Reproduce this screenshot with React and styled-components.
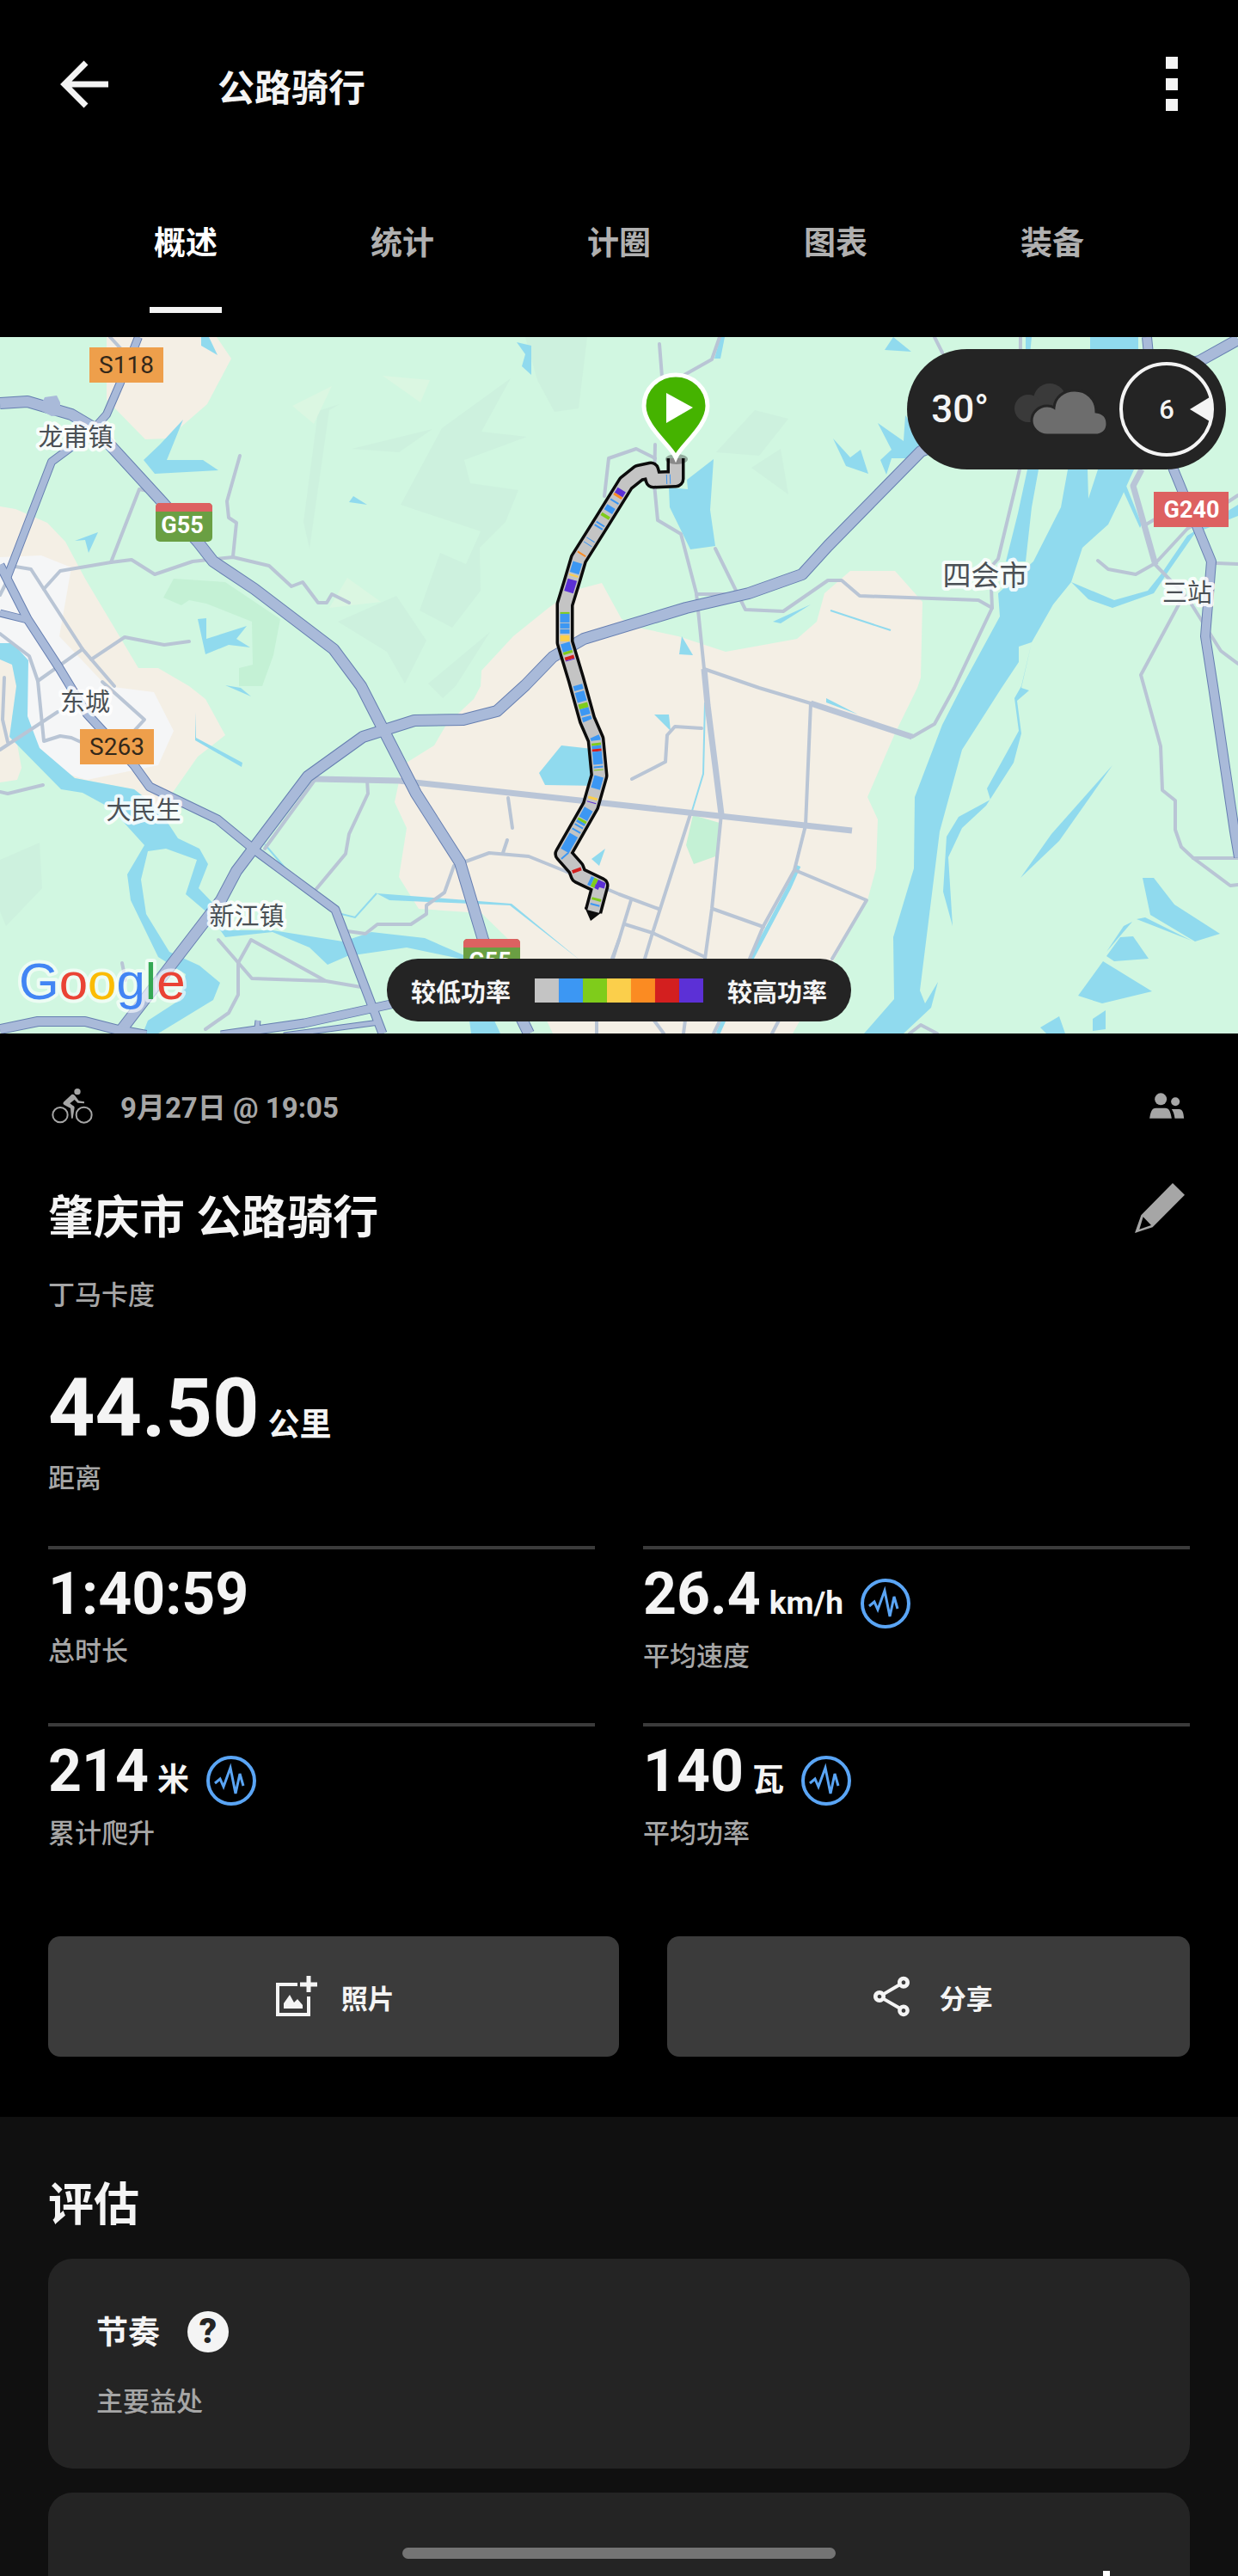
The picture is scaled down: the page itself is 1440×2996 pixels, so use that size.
import React, { useState } from "react";
import styled, { createGlobalStyle } from "styled-components";
import { MdOutlineShare } from "react-icons/md";

const tabs = ["概述", "统计", "计圈", "图表", "装备"];

const stats = [
  { value: "1:40:59", label: "总时长" },
  { value: "26.4", unit: "km/h", label: "平均速度", chart: true },
  { value: "214", unit: "米", label: "累计爬升", chart: true },
  { value: "140", unit: "瓦", label: "平均功率", chart: true },
];

const powerColors = ["#c4c4c4", "#3c97f3", "#7fcc1b", "#fbcf4b", "#fb8b22", "#d31f1f", "#5c30d6"];

const hills = [
  "611,0 683,0 673,83 645,87 625,50",
  "594,48 560,110 613,116 540,143 547,170 603,178 588,215 558,245 559,295 526,338 488,318 512,251 542,264 559,226 466,195 514,106",
  "409,130 503,107 464,134",
  "395,78 383,85 360,246 353,215 370,86",
  "393,331 461,301 496,353 471,403 450,366",
  "570,343 498,403 515,420 530,406",
  "46,588 49,641 7,685 0,668 0,608",
  "878,85 917,95 883,138 833,134",
  "908,130 917,183 874,152",
];

const forests = [
  "202,281 262,285 326,328 318,370 305,406 278,406 278,385 294,381 293,331 240,310 220,306 211,312 190,303",
  "806,556 837,565 835,603 807,613 798,591",
];

const meadows = ["386,57 365,101 340,80", "445,45 500,50 489,76", "404,280 443,308 383,315"];

const fields = [
  "124,0 252,0 269,25 241,78 195,118 169,119 124,73",
  "0,197 18,200 55,216 76,238 99,281 161,385 184,385 220,406 239,421 262,463 230,488 202,528 184,548 156,526 87,513 46,478 32,441 14,440 25,501 20,515 0,518",
  "700,286 666,295 638,315 597,348 560,388 559,406 551,421 519,451 505,475 468,498 459,541 473,571 464,628 487,665 560,670 592,701 643,810 922,810 1009,655 1019,618 1021,561 1009,535 1041,461 1067,408 1071,396 1073,308 1041,272 989,272 959,298 950,331 927,351 844,366 789,348 743,338 723,328",
];

const town = "0,256 48,254 83,268 69,348 124,406 179,413 202,458 184,498 101,515 78,508 32,465 32,376 15,356 0,356";

const water = [
  "1268,0 1324,0 1324,90 1319,154 1305,185 1289,218 1259,245 1246,285 1225,311 1200,355 1188,408 1197,411 1183,423 1188,461 1179,495 1147,545 1119,571 1103,605 1108,685 1097,645 1101,581 1115,558 1152,538 1148,525 1185,458 1180,420 1188,406 1200,355 1185,360 1185,378 1165,408 1119,480 1093,575 1070,760 1076,775 1091,750 1083,780 1051,810 1005,810 1040,770 1039,698 1063,618 1064,535 1096,451 1119,406 1163,325 1161,298 1202,261 1234,198 1242,154 1265,154 1266,188 1277,154 1268,90",
  "1195,154 1208,154 1200,198 1193,261 1170,261 1184,205",
  "1193,0 1200,0 1198,20 1193,20",
  "1308,168 1328,218 1326,222 1307,180",
  "1440,195 1440,208 1390,228 1360,271 1342,298 1294,315 1266,305 1246,285 1296,306 1335,295 1351,275 1381,231",
  "830,142 826,201 832,243 803,247 779,198 778,175 800,177 799,166",
  "969,118 989,140 1001,131 1010,159 984,150",
  "1021,100 1051,121 1053,91 1074,120 1064,141 1037,141 1031,160 1024,143 1037,131",
  "1039,0 1060,17 1029,15",
  "838,0 843,0 838,25 831,25",
  "943,311 908,333 899,331",
  "793,348 806,370 790,369",
  "213,96 194,143 236,143 254,155 180,159 167,143 186,125",
  "234,0 243,0 253,21 234,10",
  "601,6 618,10 618,44 607,34 611,20",
  "411,185 427,195 406,192",
  "114,227 103,251 99,236 87,237",
  "230,328 240,327 240,351 287,336 275,351 291,361 266,358 239,369",
  "0,356 15,356 33,376 32,441 46,478 87,513 156,526 184,548 207,583 232,595 242,613 231,641 257,668 262,690 317,690 399,703 432,692 494,699 542,720 590,745 580,750 535,723 473,710 404,720 381,730 360,710 317,692 262,698 243,671 216,648 229,608 193,595 172,598 164,631 170,671 197,715 232,731 256,751 248,771 184,810 166,810 172,795 209,771 216,741 184,721 152,655 148,625 168,591 129,548 96,530 71,526 11,465 19,406 14,381 0,375",
  "546,795 575,795 582,810 548,810",
  "227,436 228,466 282,495 281,500 227,469",
  "262,405 280,408 292,418",
  "438,647 595,659 675,725 593,661 453,655",
  "653,475 689,479 697,522 634,521 627,507",
  "704,595 697,615 688,607",
  "761,439 778,439 780,458",
  "961,420 998,439 961,425",
  "1294,498 1232,586 1187,629 1223,578",
  "1329,629 1342,629 1366,660 1419,694 1390,703 1338,672",
  "1332,675 1386,702 1322,677",
  "1317,680 1287,715 1307,685",
  "1303,698 1318,697 1336,723 1296,726 1287,720",
  "1283,726 1340,761 1282,775 1254,766",
  "1286,783 1286,805 1271,807 1271,793",
  "1232,790 1239,810 1217,810 1210,803",
];

const streams = [
  "966,318 1036,341",
  "393,670 413,675 438,647",
  "308,590 338,625",
  "820,425 818,508 805,551",
];

const streets = [
  "279,138 264,191 266,210 275,216 271,255",
  "18,267 36,270 96,363 133,406",
  "51,293 70,272 129,262 153,259 180,276 224,261 271,256 313,266 339,290 352,285 370,309 380,309 386,299 406,309",
  "129,262 162,177 177,180",
  "220,354 191,358 145,349 106,375",
  "96,363 44,400",
  "0,345 34,371 44,400 51,470 70,464 83,466 94,471",
  "119,401 168,445 156,458",
  "0,480 67,436",
  "5,396 3,445 9,471",
  "0,529 9,531 50,521",
  "128,0 141,14",
  "0,300 8,284",
  "308,595 367,514",
  "427,515 428,531 406,578 402,601 367,643",
  "591,536 596,571",
  "590,585 585,600",
  "404,691 425,694 439,683 478,683 496,671 496,661 517,646 528,615 569,600 615,604 657,621 720,648 766,665",
  "254,701 293,746 379,749 420,756",
  "379,749 292,701 277,728 277,765 266,786 239,805",
  "142,728 146,748",
  "803,555 759,693 750,723",
  "943,426 937,568 924,620 888,685 872,723 830,810",
  "839,555 828,665 820,723",
  "1061,465 1087,450 1110,408 1154,315 1138,306 1000,301 979,283 963,283 911,319 867,317 832,246",
  "816,455 785,453 776,463 774,494 735,514",
  "927,621 1008,655 968,723",
  "829,665 888,686",
  "734,655 720,701 712,723",
  "727,683 759,693 820,721",
  "767,8 770,46",
  "796,44 828,26 837,0",
  "762,125 761,171 765,213 792,229 810,298 819,386",
  "819,386 883,408 943,426",
  "810,299 849,299",
  "703,185 708,141 740,130 762,141",
  "1087,0 1096,18",
  "1187,0 1186,154 1161,258 1152,268 1154,315",
  "1344,265 1378,300 1370,313 1327,393 1350,476 1352,527 1367,539 1367,573 1374,593 1388,606 1431,638 1440,637",
  "1388,606 1440,606",
  "1277,260 1289,270 1321,276 1344,263 1381,223 1440,184",
  "1333,218 1350,208",
  "1415,263 1440,264",
  "1386,311 1420,365 1440,380",
  "755,787 772,810",
  "798,787 795,810",
  "910,787 898,810",
  "694,787 694,810",
  "720,701 712,726",
  "1058,810 1071,800 1090,810",
];

const avenues = [
  "367,514 464,516 720,544 991,574",
  "819,386 823,428 839,555",
  "943,426 1061,465",
  "1328,154 1318,173 1344,265",
];

const highways = [
  { points: "161,0 140,53 124,90 108,108", width: 8 },
  { points: "83,128 60,145 7,283", width: 8 },
  { points: "0,265 32,328 69,385 101,438 156,498 174,523 253,561 298,598 390,666 445,810", width: 9 },
  { points: "0,321 32,329", width: 7 },
  { points: "0,77 32,75 83,90 110,106 188,191 230,238 248,261 296,293 388,363 420,406 443,451 484,531 535,611 562,701 615,810", width: 12 },
  { points: "138,810 257,655 275,621 358,511 422,465 482,446 539,445 578,435 611,405 643,372 679,351 798,315 871,298 933,276 963,243 1071,133 1180,90 1395,28 1440,3", width: 12 },
  { points: "1334,0 1340,60 1365,154 1409,261 1402,348 1411,406 1436,575 1441,605", width: 10 },
  { points: "0,805 44,796 99,796 138,806 170,812", width: 10 },
  { points: "257,812 354,798 459,775 580,740", width: 9 },
  { points: "330,812 441,797", width: 5 },
  { points: "300,795 299,804", width: 5 },
];

const route =
  "786,141 786,165 760,166 757,155 743,158 728,170 700,215 673,258 665,285 657,311 657,355 670,398 683,445 693,468 697,510 687,545 655,601 670,618 673,626 698,638 690,668";

// [start, length, index in powerColors], measured along the route
const routeParts = [
  [30, 1, 1], [34, 1, 1], [104, 7, 6], [111, 3, 4], [119, 2, 1], [127, 7, 1], [138, 4, 2],
  [150, 2, 1], [154, 2, 1], [172, 1, 1], [178, 1, 1], [191, 2, 4], [203, 13, 1], [218, 2, 3],
  [224, 15, 6], [263, 2, 2], [265, 10, 1], [276, 6, 1], [283, 5, 1], [290, 7, 3], [299, 10, 1],
  [309, 3, 2], [315, 4, 5], [319, 1, 6], [350, 6, 1], [358, 12, 1], [372, 6, 2], [378, 8, 1],
  [388, 5, 1], [413, 5, 1], [421, 3, 2], [424, 4, 1], [428, 3, 5], [431, 15, 1], [448, 2, 1],
  [452, 1, 2], [460, 15, 1], [485, 3, 3], [491, 1, 6], [500, 13, 1], [514, 3, 2], [517, 3, 1],
  [522, 2, 1], [528, 2, 1], [535, 21, 1], [562, 2, 1], [583, 4, 5], [605, 4, 1], [609, 5, 2],
  [614, 7, 6], [634, 3, 2], [641, 2, 1],
];

const places = [
  { name: "龙甫镇", x: 88, y: 127 },
  { name: "四会市", x: 1146, y: 289, size: 33 },
  { name: "三站", x: 1381, y: 308 },
  { name: "东城", x: 99, y: 435 },
  { name: "大民生", x: 167, y: 561 },
  { name: "新江镇", x: 287, y: 684 },
];

function RouteMap() {
  return (
    <MapDrawing viewBox="0 0 1440 810" preserveAspectRatio="xMidYMid slice" role="img" aria-label="骑行路线">
      <rect width="1440" height="810" fill="#d1f7e1" />
      <g fill="#cdf1de">
        {hills.map((points) => <polygon key={points} points={points} />)}
      </g>
      <g fill="#dbf7e2">
        {meadows.map((points) => <polygon key={points} points={points} />)}
      </g>
      <g fill="#f4efe5">
        {fields.map((points) => <polygon key={points} points={points} />)}
      </g>
      <polygon points={town} fill="#f5f6f7" />
      <g fill="#c4f1d5">
        {forests.map((points) => <polygon key={points} points={points} />)}
      </g>
      <g fill="#90daee">
        {water.map((points) => <polygon key={points} points={points} />)}
      </g>
      <g fill="none" stroke="#90daee" strokeWidth="2">
        {streams.map((points) => <polyline key={points} points={points} />)}
        <polyline points="929,615 918,640 874,723 835,810" strokeWidth="5" />
      </g>
      <g fill="none" stroke="#b9c5d5" strokeWidth="4" strokeLinecap="round" strokeLinejoin="round">
        {streets.map((points) => <polyline key={points} points={points} />)}
      </g>
      <g fill="none" stroke="#b9c5d7" strokeWidth="7" strokeLinejoin="round">
        {avenues.map((points) => <polyline key={points} points={points} />)}
      </g>
      <g fill="none" stroke="#667fb1" strokeLinejoin="round">
        {highways.map((road) => <polyline key={road.points} points={road.points} strokeWidth={road.width + 2} />)}
      </g>
      <g fill="none" stroke="#a9bad9" strokeLinejoin="round">
        {highways.map((road) => <polyline key={road.points} points={road.points} strokeWidth={road.width} />)}
      </g>
      <polygon points="52,70 66,68 70,76 70,84 83,90 60,92 45,84" fill="#a9bad9" />

      <rect x="104" y="12" width="86" height="41" fill="#ee9f4b" />
      <rect x="93" y="456" width="86" height="41" fill="#ee9f4b" />
      <rect x="1342" y="180" width="87" height="41" fill="#dd6161" />
      <rect x="181" y="193" width="66" height="45" rx="5" fill="#6a9f43" />
      <path d="M181 203V198Q181 193 186 193H242Q247 193 247 198V203Z" fill="#dd6161" />
      <rect x="539" y="700" width="66" height="45" rx="5" fill="#6a9f43" />
      <path d="M539 710V705Q539 700 544 700H600Q605 700 605 705V710Z" fill="#dd6161" />
      <RoadName x="147" y="42">S118</RoadName>
      <RoadName x="136" y="486">S263</RoadName>
      <RoadName x="1386" y="210" $light>G240</RoadName>
      <RoadName x="212" y="228" $light>G55</RoadName>
      <RoadName x="570" y="735" $light>G55</RoadName>

      {places.map((place) => (
        <PlaceName key={place.name} x={place.x} y={place.y} $size={place.size}>{place.name}</PlaceName>
      ))}

      <polyline points={route} fill="none" stroke="#0c0c0c" strokeWidth="21" strokeLinejoin="round" />
      <polygon points="680,663 700,669 687,679" fill="#0c0c0c" />
      <polyline points={route} fill="none" stroke="#c4c4c4" strokeWidth="14" strokeLinejoin="round" />
      {routeParts.map(([start, length, color]) => (
        <polyline
          key={start}
          points={route}
          fill="none"
          stroke={powerColors[color]}
          strokeWidth="11"
          strokeDasharray={`0 ${start} ${length} 1000`}
        />
      ))}

      <ellipse cx="787" cy="142" rx="13" ry="6" fill="#000000" opacity="0.3" />
      <path
        d="M786 140C780 126 749 104 749 80A37 36 0 0 1 823 80C823 104 792 126 786 140Z"
        fill="#45b300"
        stroke="#ffffff"
        strokeWidth="5"
      />
      <path d="M775 65V100L806 82Z" fill="#ffffff" />

      <Logo x="22" y="770">
        <tspan fill="#4285f4">G</tspan>
        <tspan fill="#ea4335">o</tspan>
        <tspan fill="#fbbc05">o</tspan>
        <tspan fill="#4285f4">g</tspan>
        <tspan fill="#34a853">l</tspan>
        <tspan fill="#ea4335">e</tspan>
      </Logo>
    </MapDrawing>
  );
}

function CloudIcon() {
  return (
    <svg width="108" height="62" viewBox="0 0 108 62">
      <g fill="#3a3a3a">
        <circle cx="41" cy="20" r="19" />
        <circle cx="16" cy="30" r="16" />
        <rect x="16" y="20" width="30" height="26" />
      </g>
      <path
        d="M38 61C28 61 20 53 20 44S28 27 38 27C40 27 43 27 46 29C47 17 57 9 70 9C84 9 95 19 95 34C103 35 108 40 108 48C108 56 102 61 94 61Z"
        fill="#6d6d6d"
        stroke="#242424"
        strokeWidth="3"
      />
    </svg>
  );
}

function WindDial() {
  return (
    <svg width="110" height="110" viewBox="0 0 110 110">
      <circle cx="55" cy="55" r="53" fill="none" stroke="#f4f4f4" strokeWidth="4" />
      <path d="M82 55L105 41Q109 55 105 69Z" fill="#f4f4f4" />
      <WindSpeed x="55" y="66">6</WindSpeed>
    </svg>
  );
}

function BikeIcon() {
  return (
    <svg width="48" height="42" viewBox="60 42 144 126">
      <g fill="none" stroke="#a6a6a6" strokeWidth="6">
        <circle cx="90" cy="137" r="26" />
        <circle cx="173" cy="137" r="27" />
      </g>
      <circle cx="150" cy="56" r="11" fill="#a6a6a6" />
      <path
        d="M130 66L102 92C99 96 100 99 104 102L126 114L129 149H134L140 112C140 108 138 106 134 104L124 97L140 84L151 95L174 97V91L155 88L141 69C137 65 133 64 130 66Z"
        fill="#a6a6a6"
      />
    </svg>
  );
}

function PeopleIcon() {
  return (
    <svg width="41" height="30" viewBox="168 95 122 90" fill="#a6a6a6">
      <circle cx="207" cy="117" r="21" />
      <circle cx="258" cy="126" r="15" />
      <path d="M168 184C171 162 176 148 190 148H222C237 148 241 162 245 184Z" />
      <path d="M245 152H270C284 152 286 165 288 184H256C254 170 251 160 245 152Z" />
    </svg>
  );
}

function PencilIcon() {
  return (
    <svg width="58" height="58" viewBox="120 407 174 174">
      <path
        d="M252 407L294 448L182 561L120 581L142 519ZM149 525L136 568L177 554Z"
        fill="#a6a6a6"
        fillRule="evenodd"
      />
    </svg>
  );
}

function PulseIcon() {
  return (
    <svg width="58" height="58" viewBox="0 0 58 58" fill="none" stroke="#5aa5f5">
      <circle cx="29" cy="29" r="27" strokeWidth="4" />
      <polyline points="10,32 16,27 20,36 28,14 34,44 39,21 43,35" strokeWidth="3" />
    </svg>
  );
}

function AddPhotoIcon() {
  return (
    <svg width="48" height="48" viewBox="0 0 48 48">
      <path d="M25 10H2V45H38V24" fill="none" stroke="#f4f4f4" strokeWidth="4" />
      <path d="M38 0V19M28 10H48" stroke="#f4f4f4" strokeWidth="5" />
      <path d="M9 38V32L16 22L21 31L25 27L31 34V38Z" fill="#f4f4f4" />
    </svg>
  );
}

function BackIcon() {
  return (
    <svg width="56" height="56" viewBox="0 0 56 56" fill="none" stroke="#f4f4f4" strokeWidth="7">
      <path d="M30 3L5 28L30 53M5 28H56" />
    </svg>
  );
}

function MoreIcon() {
  return (
    <svg width="14" height="64" viewBox="0 0 14 64" fill="#f4f4f4">
      <rect width="14" height="14" />
      <rect y="25" width="14" height="14" />
      <rect y="49" width="14" height="14" />
    </svg>
  );
}

function App() {
  const [activeTab, setActiveTab] = useState("概述");

  return (
    <Page>
      <GlobalStyle />
      <Header>
        <IconButton aria-label="返回">
          <BackIcon />
        </IconButton>
        <HeaderTitle>公路骑行</HeaderTitle>
        <IconButton aria-label="更多">
          <MoreIcon />
        </IconButton>
      </Header>

      <TabBar>
        {tabs.map((tab) => (
          <Tab key={tab} $active={tab === activeTab} onClick={() => setActiveTab(tab)}>
            {tab}
          </Tab>
        ))}
      </TabBar>

      <MapSection>
        <RouteMap />
        <Weather>
          <Temperature>30°</Temperature>
          <CloudIcon />
          <WindDial />
        </Weather>
        <Legend>
          <span>较低功率</span>
          <Swatches>
            {powerColors.map((color) => <Swatch key={color} $color={color} />)}
          </Swatches>
          <span>较高功率</span>
        </Legend>
      </MapSection>

      <Summary>
        <MetaRow>
          <BikeIcon />
          <DateText>9月27日 @ 19:05</DateText>
          <PeopleIcon />
        </MetaRow>
        <TitleRow>
          <ActivityTitle>肇庆市 公路骑行</ActivityTitle>
          <IconButton aria-label="编辑">
            <PencilIcon />
          </IconButton>
        </TitleRow>
        <Label>丁马卡度</Label>
        <Distance>
          44.50<Unit>公里</Unit>
        </Distance>
        <Label>距离</Label>

        <StatGrid>
          {stats.map((stat) => (
            <Stat key={stat.label}>
              <StatRow>
                <StatValue>
                  {stat.value}
                  {stat.unit && <Unit>{stat.unit}</Unit>}
                </StatValue>
                {stat.chart && (
                  <PulseButton aria-label={stat.label}>
                    <PulseIcon />
                  </PulseButton>
                )}
              </StatRow>
              <Label>{stat.label}</Label>
            </Stat>
          ))}
        </StatGrid>

        <Actions>
          <ActionButton>
            <AddPhotoIcon />
            照片
          </ActionButton>
          <ActionButton>
            <MdOutlineShare size={56} />
            分享
          </ActionButton>
        </Actions>
      </Summary>

      <Evaluation>
        <SectionTitle>评估</SectionTitle>
        <Card>
          <CardTitle>
            <span>节奏</span>
            <HelpButton aria-label="帮助">?</HelpButton>
          </CardTitle>
          <Label>主要益处</Label>
        </Card>
        <NextCard>
          <svg width="8" height="40" viewBox="0 0 8 40">
            <rect width="8" height="40" fill="#ffffff" />
          </svg>
        </NextCard>
      </Evaluation>
      <HomeBar />
    </Page>
  );
}

const GlobalStyle = createGlobalStyle`
  * {
    box-sizing: border-box;
  }
  body {
    margin: 0;
    background-color: #000000;
    color: #f4f4f4;
    font-family: Roboto, "Noto Sans CJK SC", sans-serif;
  }
  button {
    padding: 0;
    border: none;
    background: none;
    color: inherit;
    font-family: inherit;
    cursor: pointer;
  }
  svg {
    display: block;
    flex-shrink: 0;
  }
`;

const Page = styled.div`
  display: flex;
  flex-direction: column;
  min-height: 100vh;
`;

const Header = styled.header`
  display: flex;
  align-items: center;
  height: 196px;
  padding: 0 70px;
`;

const IconButton = styled.button`
  display: flex;
`;

const HeaderTitle = styled.h1`
  flex: 1;
  margin: 10px 0 0 127px;
  font-size: 43px;
  line-height: 60px;
  font-weight: 700;
`;

const TabBar = styled.nav`
  display: flex;
  height: 196px;
  padding: 0 90px 28px;
`;

const Tab = styled.button`
  position: relative;
  flex: 1;
  font-size: 37px;
  font-weight: 700;
  color: ${(props) => (props.$active ? "#ffffff" : "#b0b0b0")};
  &::after {
    content: "";
    display: ${(props) => (props.$active ? "block" : "none")};
    position: absolute;
    bottom: 0;
    left: 50%;
    width: 84px;
    height: 7px;
    margin-left: -42px;
    background-color: #f4f4f4;
  }
`;

const MapSection = styled.section`
  position: relative;
  height: 810px;
  overflow: hidden;
`;

const MapDrawing = styled.svg`
  width: 100%;
  height: 100%;
`;

const RoadName = styled.text`
  font-size: ${(props) => (props.$light ? 27 : 28)}px;
  font-weight: ${(props) => (props.$light ? 700 : 400)};
  text-anchor: middle;
  fill: ${(props) => (props.$light ? "#ffffff" : "#33281a")};
`;

const PlaceName = styled.text`
  font-size: ${(props) => props.$size || 29}px;
  text-anchor: middle;
  fill: #4a5055;
  stroke: rgba(255, 255, 255, 0.85);
  stroke-width: 8px;
  stroke-linejoin: round;
  paint-order: stroke;
`;

const Logo = styled.text`
  font-family: "Liberation Sans", sans-serif;
  font-size: 60px;
  stroke: rgba(255, 255, 255, 0.6);
  stroke-width: 8px;
  stroke-linejoin: round;
  paint-order: stroke;
`;

const Weather = styled.div`
  position: absolute;
  top: 14px;
  right: 14px;
  display: flex;
  align-items: center;
  gap: 14px;
  height: 140px;
  padding: 0 14px 0 28px;
  border-radius: 70px;
  background-color: #242424;
`;

const Temperature = styled.span`
  margin-right: 16px;
  font-size: 44px;
  font-weight: 500;
`;

const WindSpeed = styled.text`
  font-size: 31px;
  font-weight: 500;
  text-anchor: middle;
  fill: #f4f4f4;
`;

const Legend = styled.div`
  position: absolute;
  bottom: 14px;
  left: 50%;
  display: flex;
  align-items: center;
  gap: 28px;
  height: 73px;
  padding: 0 28px;
  border-radius: 36px;
  background-color: #242424;
  font-size: 29px;
  font-weight: 700;
  white-space: nowrap;
  transform: translateX(-50%);
`;

const Swatches = styled.div`
  display: flex;
`;

const Swatch = styled.span`
  width: 28px;
  height: 28px;
  background-color: ${(props) => props.$color};
`;

const Summary = styled.section`
  padding: 56px 56px 70px;
`;

const MetaRow = styled.div`
  display: flex;
  align-items: center;
  height: 56px;
  padding: 0 6px 0 4px;
`;

const DateText = styled.time`
  flex: 1;
  margin-left: 32px;
  font-size: 33px;
  font-weight: 700;
  color: #a6a6a6;
`;

const TitleRow = styled.div`
  display: flex;
  align-items: flex-start;
  justify-content: space-between;
  margin-top: 62px;
  padding-right: 6px;
`;

const ActivityTitle = styled.h2`
  margin: 2px 0 0;
  font-size: 53px;
  line-height: 78px;
  font-weight: 700;
`;

const Label = styled.div`
  font-size: 31px;
  line-height: 40px;
  font-weight: 500;
  color: #a6a6a6;
  ${TitleRow} + & {
    margin-top: 31px;
  }
`;

const Distance = styled.div`
  margin: 52px 0 4px;
  font-size: 95px;
  line-height: 117px;
  font-weight: 700;
`;

const Unit = styled.span`
  margin-left: 10px;
  font-size: 37px;
  line-height: 40px;
`;

const StatGrid = styled.div`
  display: grid;
  grid-template-columns: 1fr 1fr;
  column-gap: 56px;
  margin-top: 58px;
`;

const Stat = styled.div`
  padding: 11px 0 57px;
  border-top: 4px solid #3b3b3b;
`;

const StatRow = styled.div`
  display: flex;
  align-items: flex-start;
  margin-bottom: 6px;
`;

const StatValue = styled.div`
  font-size: 68px;
  line-height: 82px;
  font-weight: 700;
`;

const PulseButton = styled(IconButton)`
  margin: 23px 0 7px 20px;
`;

const Actions = styled.div`
  display: grid;
  grid-template-columns: 12fr 11fr;
  gap: 56px;
  margin-top: 42px;
`;

const ActionButton = styled.button`
  display: flex;
  align-items: center;
  justify-content: center;
  gap: 28px;
  height: 140px;
  padding-left: 4px;
  border-radius: 14px;
  background-color: #3b3b3b;
  font-size: 31px;
  font-weight: 700;
`;

const Evaluation = styled.section`
  display: flex;
  flex: 1;
  flex-direction: column;
  padding: 63px 56px 0;
  background-color: #101010;
`;

const SectionTitle = styled.h2`
  margin: 0 0 22px;
  font-size: 53px;
  line-height: 80px;
  font-weight: 700;
`;

const Card = styled.article`
  padding: 56px 56px 57px;
  border-radius: 28px;
  background-color: #242424;
`;

const CardTitle = styled.h3`
  display: flex;
  align-items: center;
  gap: 32px;
  margin: 0 0 33px;
  font-size: 37px;
  line-height: 58px;
  font-weight: 700;
  span {
    padding-top: 4px;
    line-height: 54px;
  }
`;

const HelpButton = styled.button`
  width: 48px;
  height: 48px;
  border-radius: 50%;
  background-color: #f4f4f4;
  color: #242424;
  font-size: 40px;
  line-height: 48px;
  font-weight: 900;
`;

const NextCard = styled.article`
  display: flex;
  flex: 1 0 97px;
  justify-content: flex-end;
  min-height: 0;
  margin-top: 28px;
  padding: 91px 93px 0;
  border-radius: 28px 28px 0 0;
  background-color: #242424;
  overflow: hidden;
  svg {
    margin-bottom: -40px;
  }
`;

const HomeBar = styled.div`
  position: fixed;
  bottom: 20px;
  left: 50%;
  width: 35%;
  height: 13px;
  border-radius: 7px;
  background-color: #747474;
  transform: translateX(-50%);
`;

export default App;
